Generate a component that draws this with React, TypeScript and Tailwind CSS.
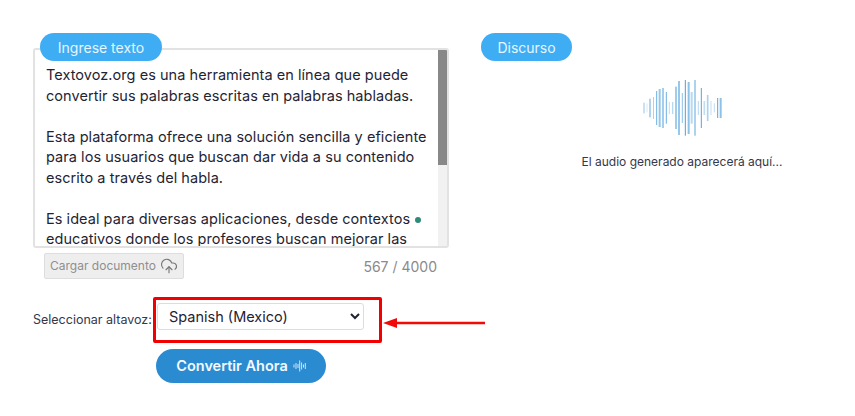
import React from 'react';
import { CloudUpload } from 'lucide-react';

const font = { fontFamily: 'Inter, "Noto Sans", sans-serif' };

// x, top, bottom, width, opacity (in 3x units of the wave drawing)
const bars: number[][] = [
  [42, 98, 130, 5, 0.3], [51, 100, 127, 3, 0.2], [60, 86, 142, 3, 0.75], [70, 81, 147, 2, 0.6],
  [80, 63, 165, 3, 0.7], [89, 57, 171, 6, 0.5], [99, 54, 174, 4, 0.65], [109, 66, 161, 3, 0.7],
  [118, 96, 132, 3, 0.3], [128, 96, 132, 4, 0.35], [138, 50, 177, 6, 0.45], [147, 33, 195, 5, 0.6],
  [157, 69, 159, 3, 0.55], [166, 30, 197, 3, 0.85], [176, 36, 192, 6, 0.55], [185, 66, 161, 6, 0.35],
  [195, 30, 197, 3, 0.8], [205, 93, 135, 3, 0.35], [214, 54, 174, 3, 0.8], [223, 93, 135, 5, 0.3],
  [233, 75, 153, 5, 0.4], [243, 93, 135, 3, 0.3], [253, 100, 127, 3, 0.3], [263, 84, 144, 3, 0.8],
  [272, 84, 144, 6, 0.55],
];

const Wave = () => (
  <svg width="105" height="75" viewBox="0 0 315 225">
    {bars.map(([x, top, bottom, w, o]) => (
      <rect key={x} x={x - w / 2} y={top} width={w} height={bottom - top} fill="#2f8fd5" opacity={o} />
    ))}
  </svg>
);

const Pill = ({ label, className }: { label: string; className: string }) => (
  <span className={`flex h-[28px] items-center justify-center rounded-full bg-[#3fadf3] text-[14px] text-[#e6f5ff] ${className}`}>
    {label}
  </span>
);

const App: React.FC = () => {
  return (
    <div className="h-[416px] w-[855px] overflow-hidden bg-white pl-[33px] pt-[33px] text-[#1f2433]" style={font}>
      <div className="flex">
        <div className="w-[416px] shrink-0">
          <div className="relative pt-[15px]">
            <Pill label="Ingrese texto" className="absolute left-[7px] top-0 z-10 w-[122px]" />
            <div className="relative h-[200px] overflow-hidden rounded-[3px] border-2 border-[#e2e2e2] bg-white">
              <div className="h-full whitespace-pre-line pl-[11px] pt-[15px] text-[14.5px] leading-[20.5px] tracking-[0.05px]">
                {'Textovoz.org es una herramienta en línea que puede\nconvertir sus palabras escritas en palabras habladas.\n\nEsta plataforma ofrece una solución sencilla y eficiente\npara los usuarios que buscan dar vida a su contenido\nescrito a través del habla.\n\nEs ideal para diversas aplicaciones, desde contextos\neducativos donde los profesores buscan mejorar las'}
              </div>
              <div className="absolute bottom-0 right-0 top-0 w-[9px] bg-[#f1f1f1]">
                <div className="h-[115px] bg-[#888888]" />
              </div>
              <span className="absolute left-[380px] top-[167px] h-[6px] w-[6px] rounded-full bg-[#2f8a78]" />
            </div>
          </div>
          <div className="mt-[5px] flex items-center justify-between pl-[11px] pr-[12px]">
            <div className="flex h-[26px] w-[140px] items-center justify-center gap-[4px] rounded-[2px] border border-[#dddddd] bg-[#eeeeee] text-[12px] text-[#8f8f8f]">
              Cargar documento
              <CloudUpload size={18} strokeWidth={1.5} className="text-[#777777]" />
            </div>
            <span className="text-[14px] text-[#8a8a8a]">567 / 4000</span>
          </div>
          <div className="mt-[18px] flex w-[460px] items-center">
            <span className="w-[120px] shrink-0 whitespace-nowrap text-[12.5px] text-[#33384a]">Seleccionar altavoz:</span>
            <div className="flex h-[46px] w-[229px] shrink-0 items-start rounded-[2px] border-[3px] border-[#f20000] pl-px pt-[3px]">
              <select
                defaultValue="es-MX"
                className="h-[27px] w-[207px] rounded-[3px] border border-[#dddddd] bg-white pl-[7px] text-[14.5px] text-[#1f2433]"
                style={font}
              >
                <option value="es-MX">Spanish (Mexico)</option>
              </select>
            </div>
            <svg width="102" height="12" viewBox="0 0 102 12" className="ml-[1px] mt-[6px] shrink-0">
              <path d="M0 6 L14 1 L14 4.8 H102 V7.2 H14 V11 Z" fill="#f00a0a" />
            </svg>
          </div>
          <div className="ml-[123px] mt-[6px] flex h-[34px] w-[170px] items-center justify-center gap-[5px] rounded-full bg-[#2b8bd1] text-[14.5px] font-semibold text-[#f2f9ff]">
            Convertir Ahora
            <svg width="13" height="12" viewBox="0 0 13 12" stroke="#cfe6f7" strokeWidth="1">
              <path d="M1 4.5V7.5M3 3V9M5 4V8M6.7 0.5V11.5M8.6 2.5V9.5M10.5 4.5V7.5M12.3 3V9" />
            </svg>
          </div>
        </div>
        <div className="ml-[32px] flex-1">
          <Pill label="Discurso" className="w-[91px]" />
          <div className="flex flex-col items-center pl-[28px] pt-[9px]">
            <Wave />
            <p className="mt-[8px] whitespace-nowrap text-[12px] text-[#33384a]">El audio generado aparecerá aquí...</p>
          </div>
        </div>
      </div>
    </div>
  );
};

export default App;
